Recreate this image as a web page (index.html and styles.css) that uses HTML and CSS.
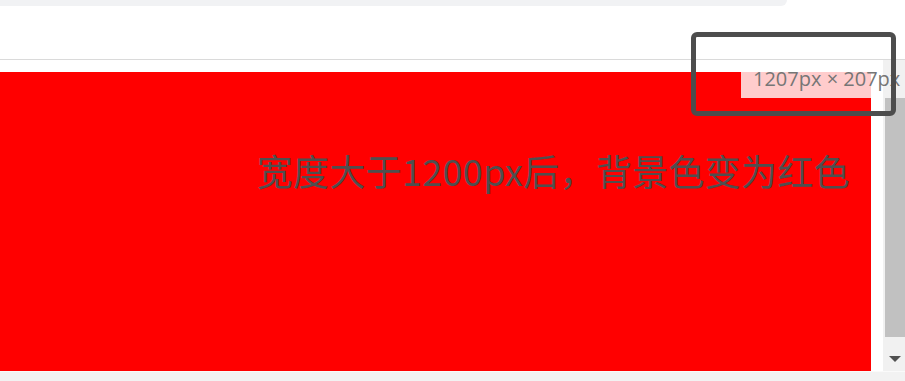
FILE: index.html
```html
<!DOCTYPE html>
<html lang="zh">
<head>
<meta charset="utf-8">
<title>宽度大于1200px</title>
<link rel="stylesheet" href="styles.css">
</head>
<body>
<div class="window">
  <div class="tabstrip"><div class="tab"></div></div>
  <div class="toolbar"></div>
  <div class="content">
    <div class="viewport">
      <div class="stage">
        <p class="message">宽度大于1200px后，背景色变为红色</p>
      </div>
      <div class="gutter"></div>
      <div class="scrollbar">
        <div class="thumb"></div>
        <div class="arrow"></div>
      </div>
    </div>
  </div>
  <div class="statusbar"></div>
  <div class="size-tip">1207px × 207px</div>
  <div class="highlight"></div>
</div>
</body>
</html>
```
FILE: styles.css
```css
html, body {
  margin: 0;
  padding: 0;
  background: #ffffff;
}
body {
  width: 905px;
  height: 381px;
  overflow: hidden;
  font-family: "Noto Sans CJK SC", "Noto Sans", sans-serif;
}
.window {
  position: relative;
  width: 905px;
  height: 381px;
  display: flex;
  flex-direction: column;
}
.tabstrip {
  height: 6px;
  background: #ffffff;
}
.tab {
  width: 787px;
  height: 6px;
  background: #f1f2f4;
  border-bottom-right-radius: 8px;
}
.toolbar {
  height: 53px;
  border-bottom: 1px solid #dadada;
  background: #ffffff;
}
.content {
  flex: 1;
  display: flex;
  flex-direction: column;
}
.viewport {
  flex: 1;
  display: flex;
}
.stage {
  width: 871px;
  margin-top: 12px;
  background: #ff0000;
  display: flex;
  justify-content: flex-end;
  align-items: flex-start;
}
.message {
  margin: 0;
  padding: 78px 21px 0 0;
  font-size: 36px;
  line-height: 40px;
  letter-spacing: 0.3px;
  color: #4f4f4f;
  white-space: nowrap;
}
.gutter {
  width: 12px;
  background: #ffffff;
}
.scrollbar {
  width: 22px;
  background: #f1f1f1;
  display: flex;
  flex-direction: column;
  align-items: flex-end;
  padding-top: 38px;
  box-sizing: border-box;
}
.thumb {
  width: 20px;
  height: 239px;
  background: #c1c1c1;
}
.arrow {
  margin: 19px 4px 0 0;
  width: 0;
  height: 0;
  border-left: 6px solid transparent;
  border-right: 6px solid transparent;
  border-top: 6px solid #505050;
}
.statusbar {
  height: 9px;
  background: #f2f2f2;
  border-top: 1px solid #fafafa;
}
.size-tip {
  position: absolute;
  left: 741px;
  top: 72px;
  width: 118px;
  height: 26px;
  padding-left: 12px;
  background: #ffcccc;
  color: #767676;
  font-family: "Open Sans", "Noto Sans", sans-serif;
  font-size: 20px;
  line-height: 14px;
  white-space: nowrap;
  overflow: visible;
}
.highlight {
  position: absolute;
  left: 691px;
  top: 32px;
  width: 195px;
  height: 74px;
  border: 5px solid #4d4d4d;
  border-radius: 6px;
}
```
